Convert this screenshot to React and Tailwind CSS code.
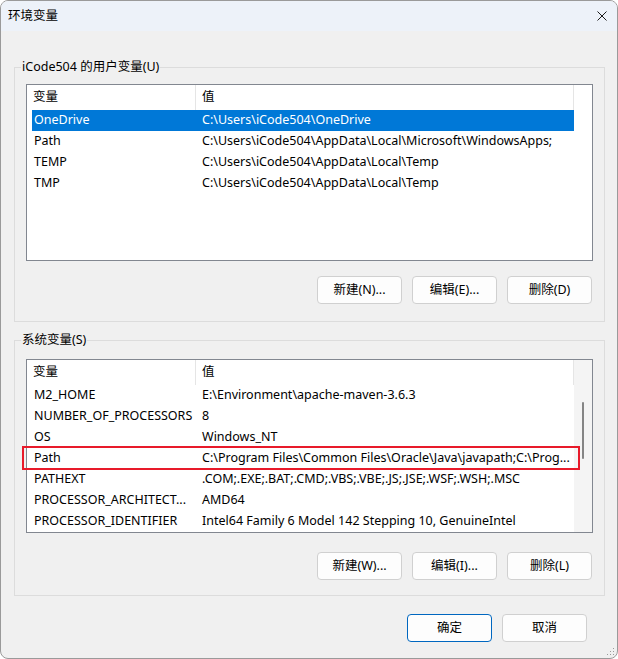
import React from 'react';

// ── Data ──
const USER_VARS = [
  { name: 'OneDrive', value: 'C:\\Users\\iCode504\\OneDrive' },
  { name: 'Path', value: 'C:\\Users\\iCode504\\AppData\\Local\\Microsoft\\WindowsApps;' },
  { name: 'TEMP', value: 'C:\\Users\\iCode504\\AppData\\Local\\Temp' },
  { name: 'TMP', value: 'C:\\Users\\iCode504\\AppData\\Local\\Temp' },
];

const SYSTEM_VARS = [
  { name: 'M2_HOME', value: 'E:\\Environment\\apache-maven-3.6.3' },
  { name: 'NUMBER_OF_PROCESSORS', value: '8' },
  { name: 'OS', value: 'Windows_NT' },
  { name: 'Path', value: 'C:\\Program Files\\Common Files\\Oracle\\Java\\javapath;C:\\Prog...' },
  { name: 'PATHEXT', value: '.COM;.EXE;.BAT;.CMD;.VBS;.VBE;.JS;.JSE;.WSF;.WSH;.MSC' },
  { name: 'PROCESSOR_ARCHITECT...', value: 'AMD64' },
  { name: 'PROCESSOR_IDENTIFIER', value: 'Intel64 Family 6 Model 142 Stepping 10, GenuineIntel' },
];

// ── Button ──
function WinButton({ children, primary = false, className = '' }) {
  return (
    <button
      type="button"
      className={`h-[28px] w-[85px] rounded-[4px] bg-[#fdfdfd] text-[12.5px] leading-none text-black
                  ${primary ? 'border border-[#0067c0]' : 'border border-[#d0d0d0]'}
                  ${className}`}
    >
      {children}
    </button>
  );
}

// ── List view ──
function ListView({ rows, selected = -1, marked = -1, scrollbar = false, className = '' }) {
  return (
    <div className={`flex border border-[#828790] bg-white ${className}`}>
      <div className="flex flex-1 flex-col">
        {/* Header */}
        <div className="flex h-[25px] shrink-0">
          <div className="flex w-[169px] items-center border-r border-[#e5e5e5] pl-[6px]">变量</div>
          <div className="flex flex-1 items-center border-r border-[#e5e5e5] pl-[6px]">值</div>
        </div>

        {/* Rows */}
        <div className="ml-[5px] flex flex-col">
          {rows.map((r, i) => (
            <div
              key={r.name + i}
              className={`relative flex h-[21px] items-center whitespace-nowrap
                          ${i === selected ? 'bg-[#0078d7] text-white' : 'text-black'}`}
            >
              <div className="w-[164px] shrink-0 overflow-hidden pl-[2px]">{r.name}</div>
              <div className="flex-1 overflow-hidden pl-[6px]">{r.value}</div>
              {i === marked && (
                <div className="pointer-events-none absolute -top-[2px] -bottom-[1px] -left-[10px] -right-[6px] border-2 border-[#e81a2a]" />
              )}
            </div>
          ))}
        </div>
      </div>

      {/* Scrollbar column */}
      <div className={`w-[18px] shrink-0 ${scrollbar ? 'bg-[#f4f4f4] pl-[8px] pt-[42px]' : ''}`}>
        {scrollbar && <div className="h-[57px] w-[2px] rounded-full bg-[#858585]" />}
      </div>
    </div>
  );
}

// ── Group box ──
function GroupBox({ label, children, className = '' }) {
  return (
    <fieldset className={`border border-[#dcdcdc] px-[11px] ${className}`}>
      <legend className="-ml-[5px] px-[1px] leading-4">{label}</legend>
      {children}
    </fieldset>
  );
}

export default function App() {
  return (
    <div className="h-[659px] w-[618px] bg-white font-['Noto_Sans','Noto_Sans_CJK_SC',sans-serif] text-[12.5px] text-black">
      <div className="relative flex h-full flex-col overflow-hidden rounded-[8px] border border-[#9a9a9a] bg-[#f0f0f0]">
        {/* Title bar */}
        <div className="flex h-[30px] shrink-0 items-center justify-between bg-[#edf2f9] pl-[7px] pr-[10px]">
          <span>环境变量</span>
          <svg width="10" height="10" viewBox="0 0 10 10" className="text-[#1a1a1a]">
            <path d="M0.5 0.5 L9.5 9.5 M9.5 0.5 L0.5 9.5" stroke="currentColor" strokeWidth="1" fill="none" />
          </svg>
        </div>

        {/* Body */}
        <div className="flex flex-1 flex-col pl-[13px] pr-[12px] pt-[28px]">
          <GroupBox label="iCode504 的用户变量(U)" className="pb-[17px]">
            <ListView rows={USER_VARS} selected={0} className="mt-[9px] h-[177px]" />
            <div className="mt-[15px] flex justify-end gap-[10px] pr-[1px]">
              <WinButton>新建(N)...</WinButton>
              <WinButton>编辑(E)...</WinButton>
              <WinButton>删除(D)</WinButton>
            </div>
          </GroupBox>

          <GroupBox label="系统变量(S)" className="mt-[10px] pb-[15px]">
            <ListView rows={SYSTEM_VARS} marked={3} scrollbar className="mt-[11px]" />
            <div className="mt-[19px] flex justify-end gap-[10px] pr-[1px]">
              <WinButton>新建(W)...</WinButton>
              <WinButton>编辑(I)...</WinButton>
              <WinButton>删除(L)</WinButton>
            </div>
          </GroupBox>

          <div className="mt-[18px] flex justify-end gap-[10px] pr-[18px]">
            <WinButton primary>确定</WinButton>
            <WinButton>取消</WinButton>
          </div>
        </div>

        {/* Resize grip */}
        <svg width="9" height="9" viewBox="0 0 9 9" className="absolute bottom-[2px] right-[2px] text-[#9a9a9a]">
          <rect x="7" y="1" width="1" height="1" fill="currentColor" />
          <rect x="4" y="4" width="1" height="1" fill="currentColor" />
          <rect x="7" y="4" width="1" height="1" fill="currentColor" />
          <rect x="1" y="7" width="1" height="1" fill="currentColor" />
          <rect x="4" y="7" width="1" height="1" fill="currentColor" />
          <rect x="7" y="7" width="1" height="1" fill="currentColor" />
        </svg>
      </div>
    </div>
  );
}
